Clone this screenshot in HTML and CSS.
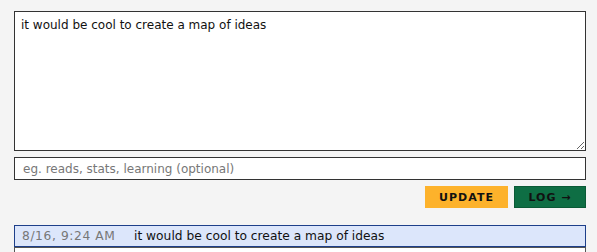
FILE: index.html
```html
<!DOCTYPE html>
<html lang="en">
<head>
    <meta charset="UTF-8">
    <title>Log</title>
    <link rel="stylesheet" href="styles.css">
</head>
<body>
<div class="wrap">
    <textarea class="entry">it would be cool to create a map of ideas</textarea>
    <input type="text" class="tags" placeholder="eg. reads, stats, learning (optional)">
    <div class="button-bar">
        <button class="btn btn-update">UPDATE</button>
        <button class="btn btn-log">LOG &rarr;</button>
    </div>
    <ul class="log-list">
        <li class="log-item selected"><span class="time">8/16, 9:24 AM</span><span class="msg">it would be cool to create a map of ideas</span></li>
        <li class="log-item"><span class="time">8/14, 7:47 AM</span><span class="msg">Read a bit more of a new book on focus</span></li>
    </ul>
</div>
</body>
</html>
```

FILE: styles.css
```css
*{
    margin: 0;
    padding: 0;
    box-sizing: border-box;
}
body{
    background-color: #f4f4f4;
    font-family: "DejaVu Sans", Verdana, sans-serif;
    font-size: 12px;
    color: #111;
}
.wrap{
    width: 572px;
    margin: 11px 0 0 14px;
}
.entry{
    display: block;
    width: 100%;
    height: 140px;
    border: 1px solid #333;
    background-color: #fff;
    padding: 6px 6px;
    font-family: "DejaVu Sans", Verdana, sans-serif;
    font-size: 12px;
    color: #111;
    resize: vertical;
}
.tags{
    display: block;
    width: 100%;
    height: 23px;
    margin-top: 6px;
    border: 1px solid #333;
    background-color: #fff;
    padding: 0 8px;
    font-family: "DejaVu Sans", Verdana, sans-serif;
    font-size: 12px;
}
.tags::placeholder{
    color: #777;
}
.button-bar{
    display: flex;
    justify-content: flex-end;
    gap: 6px;
    margin-top: 6px;
}
.btn{
    height: 22px;
    border: 1px solid transparent;
    font-family: "DejaVu Sans", Verdana, sans-serif;
    font-size: 11px;
    font-weight: bold;
    letter-spacing: 1px;
    color: #111;
}
.btn-update{
    width: 83px;
    background-color: #fdb22b;
    border-color: #fdb22b;
}
.btn-log{
    width: 72px;
    background-color: #0e6e44;
    border-color: #0a5a36;
}
.log-list{
    list-style: none;
    margin-top: 17px;
}
.log-item{
    display: flex;
    height: 22px;
    align-items: center;
    padding: 0 7px;
    background-color: #fff;
    border: 1px solid #555;
    font-size: 12.25px;
}
.log-item.selected{
    background-color: #dce6fb;
    border-color: #1d3f8a;
}
.time{
    width: 112px;
    color: #777;
    letter-spacing: 0.6px;
}
```
